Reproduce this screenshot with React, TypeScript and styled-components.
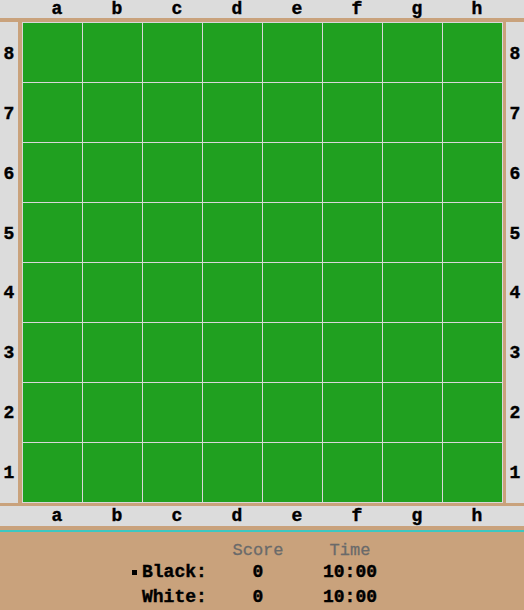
import React from "react";
import styled, { createGlobalStyle } from "styled-components";

const Global = createGlobalStyle`
  html, body { margin: 0; padding: 0; background: #c9a27c; }
  body { font-family: "Liberation Mono", monospace; }
`;

const TAN = "#c9a27c";
const GRAY = "#dcdcdc";

const Page = styled.div`
  width: 524px;
  height: 610px;
  background: ${TAN};
  display: flex;
  flex-direction: column;
  overflow: hidden;
`;

const FileStrip = styled.div<{ $bottom?: boolean }>`
  height: ${(p) => (p.$bottom ? 20 : 18)}px;
  margin-top: ${(p) => (p.$bottom ? 3 : 0)}px;
  margin-bottom: 4px;
  background: ${GRAY};
  display: flex;
  padding-left: 27px;
`;

const FileLabel = styled.div`
  width: 60px;
  display: flex;
  align-items: center;
  justify-content: center;
  font: bold 18px/18px "Liberation Mono", monospace;
  color: #000;
  -webkit-text-stroke: 0.4px #000;
`;

const MiddleRow = styled.div`
  display: flex;
  height: 481px;
`;

const RankStrip = styled.div<{ $right?: boolean }>`
  width: 18px;
  background: ${GRAY};
  margin-right: ${(p) => (p.$right ? 0 : 4)}px;
  margin-left: ${(p) => (p.$right ? 3 : 0)}px;
  display: flex;
  flex-direction: column;
  padding-top: 2px;
`;

const RankLabel = styled.div`
  height: 60px;
  display: flex;
  align-items: center;
  justify-content: center;
  font: bold 18px/18px "Liberation Mono", monospace;
  color: #000;
  -webkit-text-stroke: 0.4px #000;
`;

const Board = styled.div`
  width: 481px;
  height: 481px;
  box-sizing: border-box;
  padding: 1px;
  background: #d8d8d8;
  display: grid;
  grid-template-columns: repeat(8, 59px);
  grid-template-rows: repeat(8, 59px);
  gap: 1px;
`;

const Square = styled.div`
  background: #20a020;
`;

const Panel = styled.div`
  flex: 1;
  border-top: 2px solid #3cc8c2;
  padding-top: 9px;
  padding-left: 131px;
  display: grid;
  grid-template-columns: 85px 84px 100px;
  grid-auto-rows: min-content;
  align-content: start;
`;

const HeadCell = styled.div<{ $center?: boolean }>`
  font: 17px/19px "Liberation Mono", monospace;
  color: #6a6a6a;
  -webkit-text-stroke: 0.3px #6a6a6a;
  text-align: ${(p) => (p.$center ? "center" : "left")};
`;

const ValueCell = styled.div<{ $center?: boolean }>`
  font: bold 18px/25px "Liberation Mono", monospace;
  color: #000;
  -webkit-text-stroke: 0.4px #000;
  display: flex;
  align-items: center;
  justify-content: ${(p) => (p.$center ? "center" : "flex-start")};
`;

const TurnSlot = styled.span`
  width: 11px;
  display: inline-flex;
  align-items: center;
  padding-left: 1px;
  box-sizing: border-box;
  align-self: stretch;
  padding-bottom: 1px;
`;

const TurnMark = styled.span<{ $on: boolean }>`
  width: 5px;
  height: 5px;
  background: ${(p) => (p.$on ? "#000" : "transparent")};
`;

const files = ["a", "b", "c", "d", "e", "f", "g", "h"];
const ranks = ["8", "7", "6", "5", "4", "3", "2", "1"];

const players = [
  { name: "Black:", score: 0, time: "10:00", turn: true },
  { name: "White:", score: 0, time: "10:00", turn: false },
];

export default function App() {
  return (
    <>
      <Global />
      <Page>
        <FileStrip>
          {files.map((f) => (
            <FileLabel key={f}>{f}</FileLabel>
          ))}
        </FileStrip>
        <MiddleRow>
          <RankStrip>
            {ranks.map((r) => (
              <RankLabel key={r}>{r}</RankLabel>
            ))}
          </RankStrip>
          <Board>
            {Array.from({ length: 64 }, (_, i) => (
              <Square key={i} />
            ))}
          </Board>
          <RankStrip $right>
            {ranks.map((r) => (
              <RankLabel key={r}>{r}</RankLabel>
            ))}
          </RankStrip>
        </MiddleRow>
        <FileStrip $bottom>
          {files.map((f) => (
            <FileLabel key={f}>{f}</FileLabel>
          ))}
        </FileStrip>
        <Panel>
          <HeadCell />
          <HeadCell $center>Score</HeadCell>
          <HeadCell $center>Time</HeadCell>
          {players.map((p) => (
            <React.Fragment key={p.name}>
              <ValueCell>
                <TurnSlot>
                  <TurnMark $on={p.turn} />
                </TurnSlot>
                {p.name}
              </ValueCell>
              <ValueCell $center>{p.score}</ValueCell>
              <ValueCell $center>{p.time}</ValueCell>
            </React.Fragment>
          ))}
        </Panel>
      </Page>
    </>
  );
}
